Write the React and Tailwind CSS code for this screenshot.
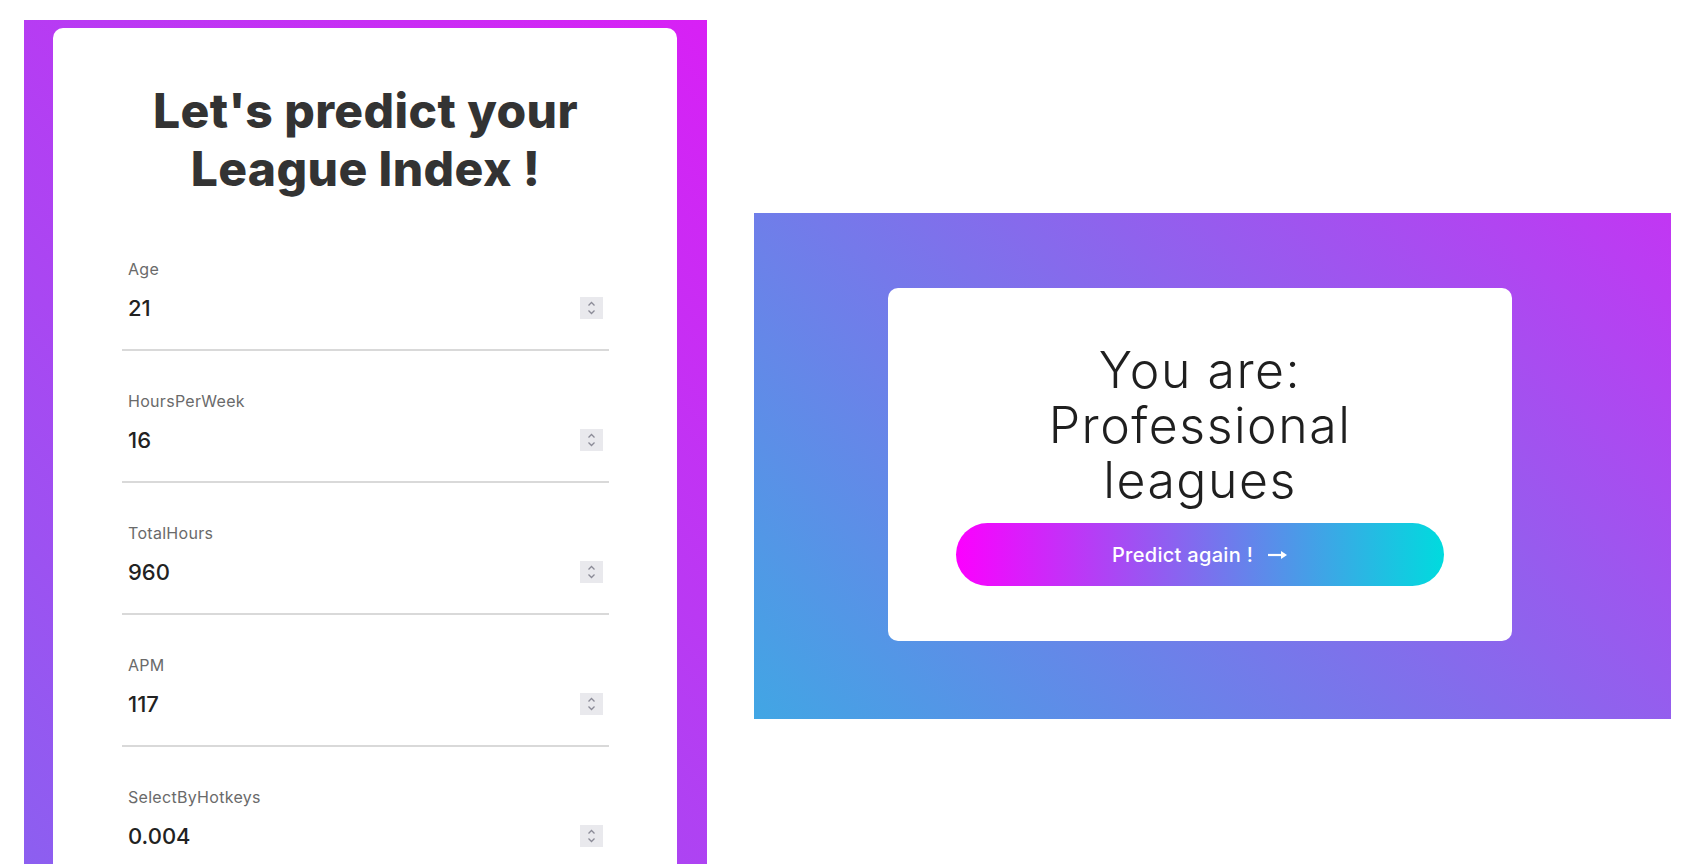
import { useState } from "react";

const FONT = { fontFamily: "Inter, 'Noto Sans', sans-serif" };

const initialFields = [
    { name: "Age", value: "21" },
    { name: "HoursPerWeek", value: "16" },
    { name: "TotalHours", value: "960" },
    { name: "APM", value: "117" },
    { name: "SelectByHotkeys", value: "0.004" },
];

function Spinner() {
    return (
        <div className="w-[23px] h-[22px] bg-[#e9e9ed] shrink-0">
            <svg width="23" height="22" viewBox="0 0 23 22" fill="none">
                <path d="M8.5 8.5 L11.5 5.5 L14.5 8.5" stroke="#8b8b97" strokeWidth="1.3" />
                <path d="M8.5 13.5 L11.5 16.5 L14.5 13.5" stroke="#8b8b97" strokeWidth="1.3" />
            </svg>
        </div>
    );
}

function Field({ name, value, onChange }) {
    return (
        <div className="mb-[38px]">
            <label className="block px-[6px] h-6 text-[16px] leading-6 tracking-[0.3px] text-[#6a6a6a]">{name}</label>
            <div className="mt-[11px] pb-[25px] border-b-2 border-[#d9d9d9]">
                <div className="h-8 flex items-center justify-between px-[6px]">
                    <input
                        type="text"
                        value={value}
                        onChange={(e) => onChange(name, e.target.value)}
                        className="flex-1 min-w-0 bg-transparent outline-none text-[22px] leading-8 font-medium text-[#222]"
                    />
                    <Spinner />
                </div>
            </div>
        </div>
    );
}

export default function App() {
    const [fields, setFields] = useState(initialFields);

    const handleChange = (name, value) => {
        setFields(fields.map((f) => (f.name === name ? { ...f, value } : f)));
    };

    return (
        <div className="h-[864px] overflow-hidden bg-white" style={FONT}>
            <div className="flex items-start pl-6 pt-5 gap-[47px]">
                {/* form */}
                <div className="w-[683px] h-[844px] overflow-hidden pl-[29px] pr-[30px] pt-2 bg-[linear-gradient(45deg,#8c5ff0,#d820f5)]">
                    <div className="bg-white rounded-[10px] pt-[54px] pl-[69px] pr-[68px] pb-10">
                        <h1 className="text-center text-[48px] leading-[58px] font-extrabold tracking-[0.4px] text-[#333]">
                            Let's predict your
                            <br />
                            League Index !
                        </h1>
                        <form className="mt-[59px]">
                            {fields.map((f) => (
                                <Field key={f.name} name={f.name} value={f.value} onChange={handleChange} />
                            ))}
                        </form>
                    </div>
                </div>

                {/* result */}
                <div className="mt-[193px] w-[917px] h-[506px] pl-[134px] pt-[75px] bg-[linear-gradient(45deg,#41a6e4,#c236f3)]">
                    <div className="w-[624px] h-[353px] bg-white rounded-[10px] px-[68px] pt-[55px] flex flex-col items-center">
                        <h2 className="text-center text-[50px] leading-[55px] font-light tracking-[1.5px] text-[#1f1f1f]">
                            You are:
                            <br />
                            Professional
                            <br />
                            leagues
                        </h2>
                        <button
                            type="button"
                            className="mt-[15px] w-full h-[63px] rounded-full flex items-center justify-center gap-[15px] text-white text-[20px] font-medium tracking-[0.3px] bg-[linear-gradient(to_right,#fc00ff,#00dbde)]"
                        >
                            <span>Predict again !</span>
                            <svg width="20" height="12" viewBox="0 0 20 12" fill="none">
                                <path d="M0 6 H17" stroke="white" strokeWidth="2.2" />
                                <path d="M13 2 L19 6 L13 10 Z" fill="white" />
                            </svg>
                        </button>
                    </div>
                </div>
            </div>
        </div>
    );
}
